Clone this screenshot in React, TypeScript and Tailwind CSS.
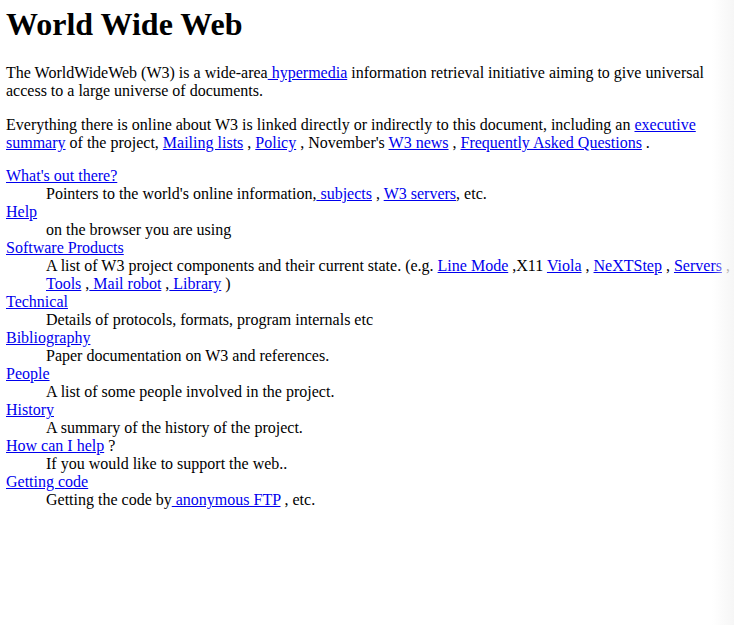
const link = "text-[#0000EE] underline";

function A({ children }: { children: React.ReactNode }) {
  return (
    <a href="#" className={link}>
      {children}
    </a>
  );
}

const entries: { term: React.ReactNode; desc: React.ReactNode }[] = [
  {
    term: <A>What's out there?</A>,
    desc: (
      <>
        Pointers to the world's online information,<A> subjects</A> , <A>W3 servers</A>, etc.
      </>
    ),
  },
  { term: <A>Help</A>, desc: "on the browser you are using" },
  {
    term: <A>Software Products</A>,
    desc: (
      <>
        A list of W3 project components and their current state. (e.g. <A>Line Mode</A> ,X11{" "}
        <A>Viola</A> , <A>NeXTStep</A> , <A>Servers</A> , <A>Tools</A> ,<A> Mail robot</A> ,
        <A> Library</A> )
      </>
    ),
  },
  { term: <A>Technical</A>, desc: "Details of protocols, formats, program internals etc" },
  { term: <A>Bibliography</A>, desc: "Paper documentation on W3 and references." },
  { term: <A>People</A>, desc: "A list of some people involved in the project." },
  { term: <A>History</A>, desc: "A summary of the history of the project." },
  {
    term: (
      <>
        <A>How can I help</A> ?
      </>
    ),
    desc: "If you would like to support the web..",
  },
  {
    term: <A>Getting code</A>,
    desc: (
      <>
        Getting the code by<A> anonymous FTP</A> , etc.
      </>
    ),
  },
];

export default function App() {
  return (
    <div className="relative min-h-screen bg-white pl-[6px] pt-[6px] font-['Liberation_Serif','Times_New_Roman',serif] text-[16px] leading-[18px] text-black">
      <h1 className="mb-[21px] text-[32px] font-bold leading-[37px]">World Wide Web</h1>

      <p className="mb-4">
        The WorldWideWeb (W3) is a wide-area<A> hypermedia</A> information retrieval initiative aiming to
        give universal access to a large universe of documents.
      </p>

      <p className="mb-[15px]">
        Everything there is online about W3 is linked directly or indirectly to this document, including an{" "}
        <A>executive summary</A> of the project, <A>Mailing lists</A> , <A>Policy</A> , November's{" "}
        <A>W3 news</A> , <A>Frequently Asked Questions</A> .
      </p>

      <dl>
        {entries.map((e, i) => (
          <div key={i}>
            <dt>{e.term}</dt>
            <dd className="ml-10">{e.desc}</dd>
          </div>
        ))}
      </dl>

      {/* faint edge shading on the right */}
      <div className="pointer-events-none absolute inset-y-0 right-0 w-[22px] bg-gradient-to-r from-transparent to-[#f6f6f6]" />
    </div>
  );
}
